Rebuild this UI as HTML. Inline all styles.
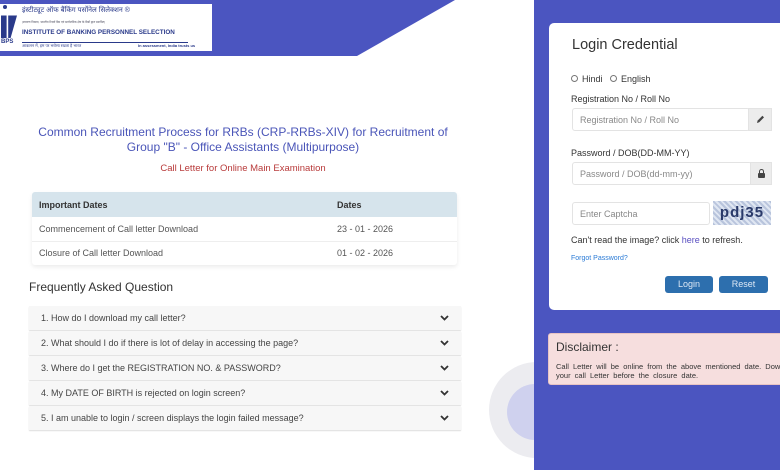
<!DOCTYPE html>
<html><head><meta charset="utf-8"><style>
*{margin:0;padding:0;box-sizing:border-box}
body{width:780px;height:470px;overflow:hidden;background:#fff;font-family:"Liberation Sans",Arial,sans-serif;position:relative;color:#333}
.abs{position:absolute}
.banner{left:0;top:0;width:460px;height:56px;background:#4b55c0;clip-path:polygon(0 0,455px 0,357px 56px,0 56px)}
.logo{left:0;top:4px;width:212px;height:47px;background:#fff}
.right{left:534px;top:0;width:246px;height:470px;background:#4b55c0}
.card{left:549px;top:23px;width:240px;height:287px;background:#fff;border-radius:5px}
.inp{position:absolute;background:#fff;border:1px solid #e3e3e3;border-radius:3px;font-size:9px;color:#888;padding-left:7px;line-height:22px;height:23px}
.btn{position:absolute;background:#2d6fae;color:#dde8f5;font-size:9px;text-align:center;line-height:17px;height:17px;border-radius:3px}
.lbl{position:absolute;font-size:9px;color:#333}
table{border-collapse:collapse;font-size:9px}
.faq{position:absolute;left:29px;width:432px;height:24px;background:#f7f7f7;box-shadow:0 1px 1px #ddd;font-size:9px;color:#444;line-height:24px;padding-left:12px}
.faq svg{position:absolute;right:12px;top:9px}
</style></head><body>
<div class="abs banner"></div>
<div class="abs logo">
 <div class="abs" style="left:1px;top:4px;width:16px;height:30px;background:#2a3a8a;clip-path:polygon(0 25%,35% 25%,35% 100%,0 100%,0 25%,45% 25%,100% 25%,60% 100%,45% 100%,45% 25%)"></div>
 <div class="abs" style="left:3px;top:1px;width:4px;height:4px;border-radius:50%;background:#2a3a8a"></div>
 <div class="abs" style="left:1px;top:35px;font-size:6px;font-weight:bold;color:#2a3a8a">BPS</div>
 <div class="abs" style="left:22px;top:2px;font-size:7px;color:#2a3a8a;font-family:'Liberation Sans','Noto Sans CJK SC',sans-serif">इंस्टीट्यूट ऑफ बैंकिंग पर्सोनेल सिलेक्शन ®</div>
 <div class="abs" style="left:22px;top:16px;font-size:3px;color:#556">(स्वायत्त निकाय, भारतीय रिज़र्व बैंक एवं सार्वजनिक क्षेत्र के बैंकों द्वारा स्थापित)</div>
 <div class="abs" style="left:22px;top:25px;font-size:6.3px;font-weight:bold;color:#2a3a8a">INSTITUTE OF BANKING PERSONNEL SELECTION</div>
 <div class="abs" style="left:22px;top:38px;width:166px;border-top:1px solid #2a3a8a"></div>
 <div class="abs" style="left:22px;top:39px;font-size:4px;color:#2a3a8a">आकलन में, हम पर भरोसा रखता है भारत</div>
 <div class="abs" style="left:138px;top:39px;font-size:4px;color:#2a3a8a;font-weight:bold">In assessment, India trusts us</div>
</div>

<div class="abs" style="left:0;top:125px;width:486px;text-align:center;font-size:12px;color:#4a55b8;line-height:15px">Common Recruitment Process for RRBs (CRP-RRBs-XIV) for Recruitment of<br>Group "B" - Office Assistants (Multipurpose)</div>
<div class="abs" style="left:0;top:163px;width:486px;text-align:center;font-size:9.5px;color:#b83a3a">Call Letter for Online Main Examination</div>

<div class="abs" style="left:32px;top:192px;width:425px;box-shadow:0 2px 4px rgba(0,0,0,.08);border-radius:3px;overflow:hidden">
<table style="width:425px">
<tr style="background:#d6e4ec;height:25px;font-weight:bold;color:#333"><td style="padding-left:7px">Important Dates</td><td style="width:120px">Dates</td></tr>
<tr style="height:24px;color:#555;border-bottom:1px solid #eee"><td style="padding-left:7px">Commencement of Call letter Download</td><td>23 - 01 - 2026</td></tr>
<tr style="height:24px;color:#555"><td style="padding-left:7px">Closure of Call letter Download</td><td>01 - 02 - 2026</td></tr>
</table></div>

<div class="abs" style="left:29px;top:280px;font-size:12px;color:#333">Frequently Asked Question</div>
<div class="faq" style="top:306px">1. How do I download my call letter?<svg width="9" height="6" viewBox="0 0 9 6"><path d="M1 1L4.5 4.5L8 1" stroke="#333" stroke-width="1.8" fill="none"/></svg></div>
<div class="faq" style="top:331px">2. What should I do if there is lot of delay in accessing the page?<svg width="9" height="6" viewBox="0 0 9 6"><path d="M1 1L4.5 4.5L8 1" stroke="#333" stroke-width="1.8" fill="none"/></svg></div>
<div class="faq" style="top:356px">3. Where do I get the REGISTRATION NO. &amp; PASSWORD?<svg width="9" height="6" viewBox="0 0 9 6"><path d="M1 1L4.5 4.5L8 1" stroke="#333" stroke-width="1.8" fill="none"/></svg></div>
<div class="faq" style="top:381px">4. My DATE OF BIRTH is rejected on login screen?<svg width="9" height="6" viewBox="0 0 9 6"><path d="M1 1L4.5 4.5L8 1" stroke="#333" stroke-width="1.8" fill="none"/></svg></div>
<div class="faq" style="top:406px">5. I am unable to login / screen displays the login failed message?<svg width="9" height="6" viewBox="0 0 9 6"><path d="M1 1L4.5 4.5L8 1" stroke="#333" stroke-width="1.8" fill="none"/></svg></div>

<div class="abs" style="left:489px;top:362px;width:96px;height:96px;border-radius:50%;background:#ececf0"></div>
<div class="abs" style="left:507px;top:384px;width:56px;height:56px;border-radius:50%;background:#cfd1ee"></div>

<div class="abs right"></div>
<div class="abs card">
 <div class="abs" style="left:23px;top:14px;font-size:14.5px;color:#333">Login Credential</div>
 <div class="lbl" style="left:22px;top:51px"><span style="display:inline-block;width:7px;height:7px;border:1px solid #777;border-radius:50%;margin-right:4px"></span>Hindi &nbsp;&nbsp;<span style="display:inline-block;width:7px;height:7px;border:1px solid #777;border-radius:50%;margin-right:4px"></span>English</div>
 <div class="lbl" style="left:22px;top:71px">Registration No / Roll No</div>
 <div class="inp" style="left:23px;top:85px;width:178px">Registration No / Roll No</div>
 <div class="abs" style="left:199px;top:85px;width:24px;height:23px;background:#ececec;border:1px solid #e3e3e3"><svg width="22" height="21" viewBox="0 0 22 21"><path d="M8 14L8.6 11.6L13.4 6.8L15 8.4L10.2 13.2Z" fill="#444"/></svg></div>
 <div class="lbl" style="left:22px;top:125px">Password / DOB(DD-MM-YY)</div>
 <div class="inp" style="left:23px;top:139px;width:180px">Password / DOB(dd-mm-yy)</div>
 <div class="abs" style="left:201px;top:139px;width:22px;height:23px;background:#ececec;border:1px solid #e3e3e3"><div style="position:absolute;left:7px;top:10px;width:7px;height:5px;background:#444;border-radius:1px"></div><div style="position:absolute;left:8px;top:6px;width:5px;height:6px;border:1.2px solid #444;border-radius:3px 3px 0 0;border-bottom:none"></div></div>
 <div class="inp" style="left:23px;top:179px;width:138px">Enter Captcha</div>
 <div class="abs" style="left:164px;top:178px;width:58px;height:24px;background:repeating-linear-gradient(45deg,#b8c4dc 0 2px,#dfe6f2 2px 4px);font-size:15px;font-weight:bold;color:#2a3a6a;text-align:center;line-height:24px;letter-spacing:1px">pdj35</div>
 <div class="lbl" style="left:22px;top:212px">Can't read the image? click <span style="color:#5a4fc0">here</span> to refresh.</div>
 <div class="abs" style="left:22px;top:232px;font-size:7px;color:#2b7bd6">Forgot Password?</div>
 <div class="btn" style="left:116px;top:253px;width:48px">Login</div>
 <div class="btn" style="left:170px;top:253px;width:49px">Reset</div>
</div>
<div class="abs" style="left:548px;top:333px;width:240px;height:52px;background:#f6dede;border:1px solid #e8c4c4;border-radius:3px">
 <div class="abs" style="left:7px;top:6px;font-size:12px;color:#333">Disclaimer :</div>
 <div class="abs" style="left:7px;top:28px;font-size:7.5px;color:#333;line-height:9px;white-space:nowrap;word-spacing:2px">Call Letter will be online from the above mentioned date. Download<br>your call Letter before the closure date.</div>
</div>
</body></html>
